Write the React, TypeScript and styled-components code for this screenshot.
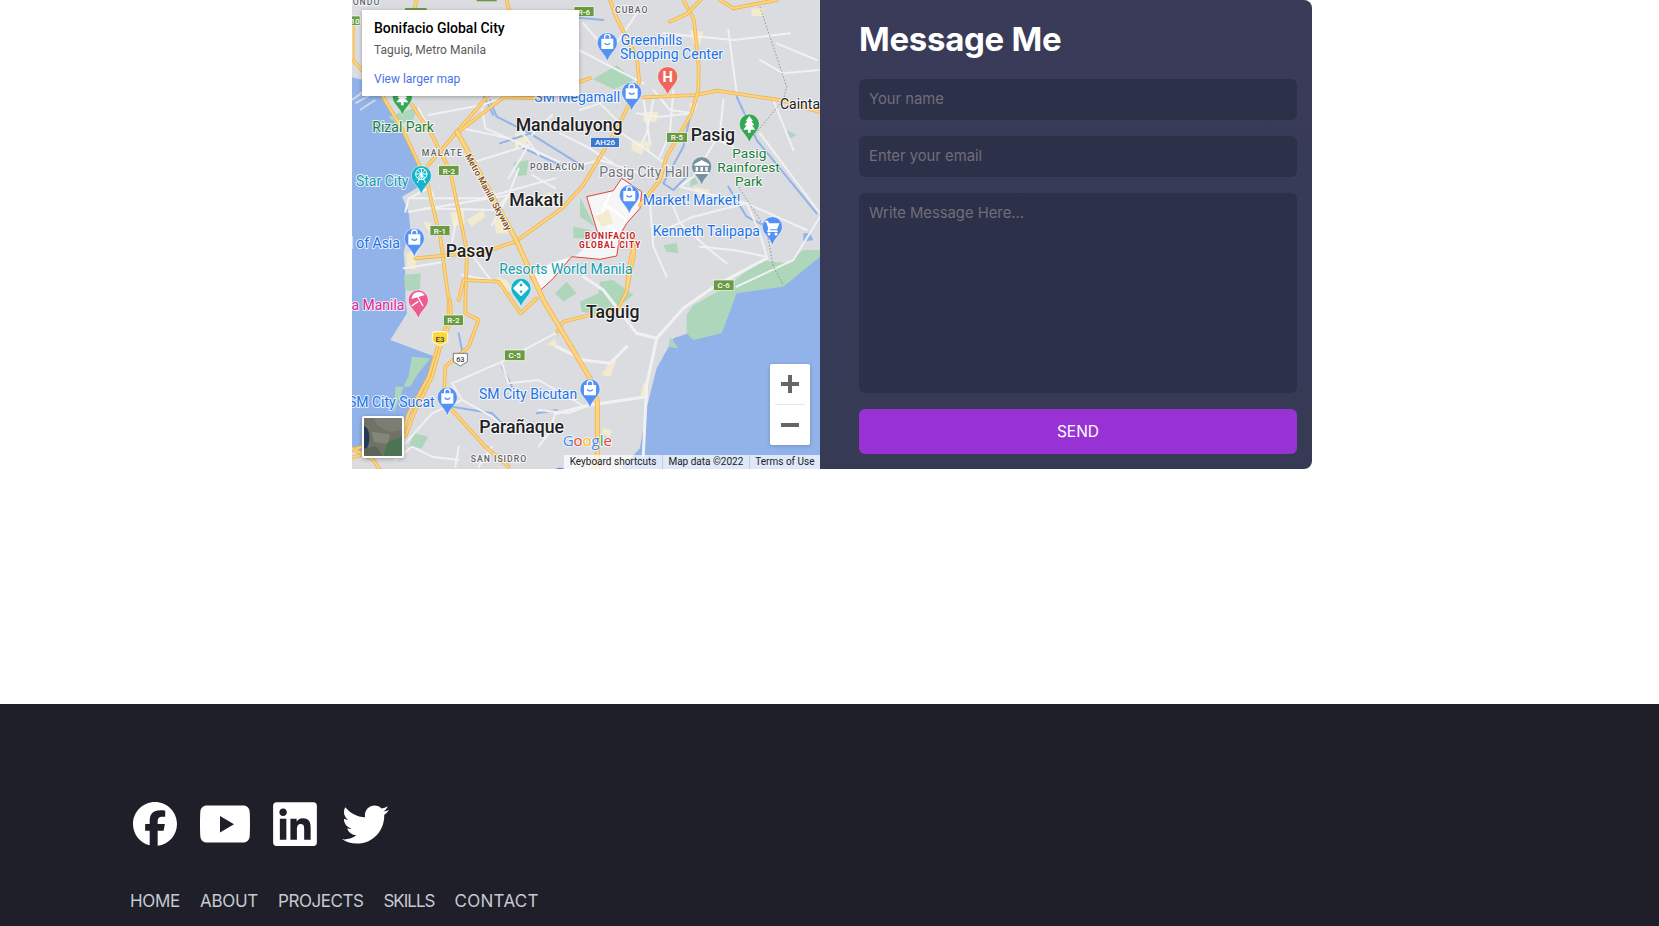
import React from "react";
import styled, { createGlobalStyle } from "styled-components";
import { FaFacebook, FaLinkedin, FaTwitter } from "react-icons/fa6";

const Global = createGlobalStyle`
  html, body { margin: 0; padding: 0; background: #fff; height: 926px; overflow: hidden; }
  * { box-sizing: border-box; }
  body { font-family: Inter, "Liberation Sans", sans-serif; }
`;

const Page = styled.div`
  display: flex;
  flex-direction: column;
  height: 926px;
  overflow: hidden;
`;
const ContactSection = styled.section`
  height: 704px;
  padding-left: 352px;
`;
const ContactCard = styled.div`
  display: flex;
  width: 960px;
  height: 469px;
`;
const MapPane = styled.div`
  position: relative;
  width: 468px;
  height: 469px;
  overflow: hidden;
  background: #dbdce0;
  font-family: Roboto, sans-serif;
`;
const MapDrawing = styled.svg`
  display: block;
  width: 468px;
  height: 469px;
`;
const InfoWindow = styled.div`
  position: absolute;
  left: 10px;
  top: 10px;
  width: 217px;
  height: 86px;
  padding: 9px 12px;
  background: #fff;
  box-shadow: 0 1px 4px rgba(0, 0, 0, 0.3);
`;
const InfoTitle = styled.div`
  font-size: 14px;
  font-weight: 500;
  line-height: 18px;
  color: #000;
`;
const InfoAddress = styled.div`
  margin-top: 5px;
  font-size: 12px;
  line-height: 16px;
  color: #5b5b5b;
`;
const InfoLink = styled.div`
  margin-top: 13px;
  font-size: 12px;
  line-height: 16px;
  color: #4a72e8;
`;
const ZoomControl = styled.div`
  position: absolute;
  left: 418px;
  top: 364px;
  width: 40px;
  height: 81px;
  display: flex;
  flex-direction: column;
  align-items: center;
  background: #fff;
  border-radius: 2px;
  box-shadow: 0 1px 4px rgba(0, 0, 0, 0.2);
`;
const ZoomButton = styled.div`
  height: 40px;
  width: 40px;
  display: flex;
  align-items: center;
  justify-content: center;
`;
const ZoomDivider = styled.div`
  width: 30px;
  height: 1px;
  background: #e6e6e6;
`;
const SatelliteThumb = styled.div`
  position: absolute;
  left: 10px;
  top: 416px;
  width: 42px;
  height: 42px;
  border: 2px solid #fff;
  border-radius: 2px;
  box-shadow: 0 1px 4px rgba(0, 0, 0, 0.3);
  overflow: hidden;
`;
const Attribution = styled.div`
  position: absolute;
  right: 0;
  bottom: 0;
  height: 14px;
  display: flex;
  font-size: 10px;
  line-height: 14px;
  color: #222;
  background: rgba(255, 255, 255, 0.7);
`;
const AttributionItem = styled.span`
  padding: 0 5.5px;
  & + & {
    border-left: 1px solid #c4cbe0;
  }
`;

const FormPane = styled.form`
  width: 492px;
  height: 469px;
  padding: 17px 15px 15px 39px;
  display: flex;
  flex-direction: column;
  background: linear-gradient(180deg, #393b58 0%, #363a55 100%);
  border-radius: 0 8px 8px 0;
`;
const FormTitle = styled.h2`
  margin: 0 0 19px;
  height: 43px;
  font-size: 33px;
  line-height: 44px;
  font-weight: 700;
  letter-spacing: -0.3px;
  color: #fff;
`;
const fieldStyles = `
  width: 100%;
  display: block;
  border: 0;
  outline: 0;
  border-radius: 6px;
  background: #2d3049;
  color: #fff;
  padding: 0 10px 2px;
  font-family: Inter, "Liberation Sans", sans-serif;
  font-size: 14.8px;
  &::placeholder { color: #6f6e79; opacity: 1; }
`;
const TextField = styled.input`
  ${fieldStyles}
  height: 41px;
  margin-bottom: 16px;
`;
const MessageField = styled.textarea`
  ${fieldStyles}
  height: 200px;
  padding-top: 11px;
  margin-bottom: 16px;
  resize: none;
`;
const SendButton = styled.button`
  height: 45px;
  width: 100%;
  border: 0;
  border-radius: 6px;
  background: #9932d4;
  color: #fff;
  font-family: Inter, "Liberation Sans", sans-serif;
  font-size: 15.5px;
  font-weight: 400;
`;

const Footer = styled.footer`
  flex: 1;
  background: #1e1f29;
  padding: 95px 130px 0;
`;
const SocialRow = styled.div`
  display: flex;
  align-items: center;
  gap: 23px;
  height: 50px;
  padding-left: 3px;
`;
const SocialLink = styled.a<{ $w: number; $h: number; $ml?: number }>`
  display: flex;
  color: #fff;
  margin-left: ${(p) => p.$ml ?? 0}px;
  svg {
    display: block;
    width: ${(p) => p.$w}px;
    height: ${(p) => p.$h}px;
  }
`;
const FooterNav = styled.nav`
  display: flex;
  gap: 20px;
  margin-top: 38px;
`;
const FooterLink = styled.a<{ $track?: number }>`
  font-size: 17px;
  line-height: 28px;
  letter-spacing: ${(p) => p.$track ?? -0.3}px;
  color: #c6c9d0;
`;

const Lbl = styled.text<{ $c: string; $s: number; $w?: number; $ls?: number }>`
  font-family: Roboto, sans-serif;
  font-size: ${(p) => p.$s}px;
  font-weight: ${(p) => p.$w ?? 400};
  letter-spacing: ${(p) => p.$ls ?? 0}px;
  fill: ${(p) => p.$c};
  stroke: rgba(255, 255, 255, 0.8);
  stroke-width: 6px;
  stroke-linejoin: round;
  paint-order: stroke;
`;
const ShieldText = styled.text<{ $c: string; $s: number }>`
  font-family: Roboto, sans-serif;
  font-size: ${(p) => p.$s}px;
  font-weight: 500;
  fill: ${(p) => p.$c};
  text-anchor: middle;
`;
const PinGlyph = styled.text`
  font-family: Roboto, sans-serif;
  font-size: 44px;
  font-weight: 700;
  fill: #fff;
  text-anchor: middle;
`;
const GoogleMark = styled.text`
  font-family: "Open Sans", sans-serif;
  font-size: 45px;
  font-weight: 400;
  stroke: rgba(255, 255, 255, 0.8);
  stroke-width: 5px;
  paint-order: stroke;
`;

const B = 705;
const BLUE = "#1a73e8";
const labels: [string, number, number, string, number, number?, number?][] = [
  ["ONDO", 8, 14, "#5f6368", 26, 500, 3],
  ["CUBAO", 795, 38, "#5f6368", 26, 500, 3],
  ["Greenhills", 812, 135, BLUE, 42],
  ["Shopping Center", 810, 178, BLUE, 42],
  ["SM Megamall", 553, 305, BLUE, 42],
  ["Cainta", 1290, 326, "#202124", 42],
  ["Rizal Park", 67, 395, "#188038", 42],
  ["Mandaluyong", 497, 393, "#202124", 53, 500],
  ["Pasig", 1022, 422, "#202124", 53, 500],
  ["Pasig", 1147, 475, "#188038", 41],
  ["Rainforest", 1102, 516, "#188038", 41],
  ["Park", 1155, 558, "#188038", 41],
  ["MALATE", 215, 468, "#5f6368", 26, 500, 4],
  ["POBLACION", 540, 509, "#5f6368", 26, 500, 2.5],
  ["Pasig City Hall", 748, 531, "#70757a", 42],
  ["Star City", 18, 558, "#129eaf", 42],
  ["Makati", 478, 618, "#202124", 53, 500],
  ["Market! Market!", 878, 615, BLUE, 42],
  ["Kenneth Talipapa", 908, 707, BLUE, 42],
  ["BONIFACIO", 705, 717, "#c5221f", 25, 700, 3],
  ["GLOBAL CITY", 687, B + 40, "#c5221f", 25, 700, 3],
  ["l of Asia", -2, B + 40, BLUE, 42],
  ["Pasay", 287, B + 65, "#202124", 53, 500],
  ["Resorts World Manila", 448, B + 118, "#129eaf", 42],
  ["la Manila", -6, B + 224, "#e52592", 42],
  ["Taguig", 708, B + 250, "#202124", 53, 500],
  ["SM City Bicutan", 387, B + 491, BLUE, 42],
  ["SM City Sucat", -6, B + 516, BLUE, 42],
  ["Parañaque", 388, B + 593, "#202124", 53, 500],
  ["SAN ISIDRO", 362, B + 680, "#5f6368", 26, 500, 3],
];
const shields: [string, number, number, number, number, string, string][] = [
  ["R-6", 672, 20, 60, 30, "#6a9b43", "#fff"],
  ["R-5", 950, 397, 62, 30, "#6a9b43", "#fff"],
  ["AH26", 722, 412, 86, 30, "#3b78d0", "#fff"],
  ["R-2", 266, 497, 61, 30, "#6a9b43", "#fff"],
  ["R-1", 240, 677, 60, 30, "#6a9b43", "#fff"],
  ["10", 0, 48, 30, 28, "#6a9b43", "#fff"],
  ["C-6", 1090, B + 135, 62, 32, "#6a9b43", "#fff"],
  ["R-2", 280, B + 240, 60, 32, "#6a9b43", "#fff"],
  ["C-5", 463, B + 345, 62, 32, "#6a9b43", "#fff"],
];
const pins: [number, number, string, string][] = [
  [772, 128, "#5491f5", "bag"],
  [845, 277, "#5491f5", "bag"],
  [953, 230, "#ee675c", "H"],
  [1198, 372, "#34a853", "tree"],
  [1055, 500, "#78909c", "hall"],
  [838, 585, "#5491f5", "bag"],
  [1267, 680, "#5491f5", "cart"],
  [214, 527, "#12b5cb", "wheel"],
  [157, 290, "#34a853", "tree"],
  [193, 715, "#5491f5", "bag"],
  [513, B + 160, "#12b5cb", "casino"],
  [205, B + 195, "#ee5a92", "beach"],
  [720, B + 462, "#5491f5", "bag"],
  [292, B + 487, "#5491f5", "bag"],
];
const yellowRoads = [
  "M96 285 L161 395 L231 545 L271 715 L296 900 L296 960 L266 1030 L236 1130 L176 1240 L156 1300 L6 1350",
  "M300 900 L304 960 L274 1030 L246 1130 L192 1240 L168 1305 L50 1362 L6 1372",
  "M186 315 L246 405 L301 515 L351 755 L346 900 L346 940 L386 960 L356 1040 L286 1100 L281 1200",
  "M416 285 L321 395 L231 500",
  "M196 775 L406 755 L496 725 L636 625 L700 555 L810 370 L868 245 L860 170 L800 55 L780 0",
  "M880 292 L1040 285 L1100 272 L1300 302 L1410 337",
  "M1000 0 L1032 60 L1046 200 L1045 270 L1025 340 L950 470 L930 540 L870 615",
  "M830 870 L835 810 L850 740 M850 705 L852 765 L830 875 L800 935 L720 945 L640 965 L622 995",
  "M1110 0 L1150 25 L1280 0",
  "M960 65 L1010 42 L1052 0",
  "M8 180 L100 280",
  "M8 60 L8 175",
  "M326 900 L341 840 L446 845 L512 940 L560 895",
  "M306 1230 L406 1340 L476 1400",
  "M470 0 L482 50 L560 110",
  "M320 400 L460 292 L580 295 L640 262 L720 235",
  "M200 0 L190 40 L160 90",
  "M6 1345 L70 1380 L90 1410",
];
const skyway = "M321 395 L496 715 L580 900 L726 1145 L742 1205 L742 1410";
/* minor roads, each list drawn in the coordinate space of one tracing */
const whiteA = [
  "M300 250 L450 185 L610 100",
  "M160 430 L240 340 L330 300 L300 250",
  "M450 190 L470 250 L560 240 L690 315",
  "M610 340 L590 400 L560 440",
  "M330 300 L420 350 L480 400",
  "M560 330 L650 340 L700 320",
  "M130 480 L180 440 L240 470 L320 480",
  "M320 440 L310 500",
  "M420 440 L380 500",
];
const whiteB = [
  "M280 0 L330 60 L400 70",
  "M140 100 L260 180 L340 240",
  "M0 240 L120 210 L240 250",
  "M360 290 L560 340 L740 420",
  "M340 350 L360 400 L450 480 L500 520",
  "M780 380 L700 510 L530 590",
  "M600 130 L780 370",
  "M490 30 L480 130 L400 260 L360 290",
  "M230 70 L300 80 L400 70",
  "M280 30 L260 130 L240 170",
  "M340 0 L330 130 L300 200",
  "M180 100 L120 40 L60 60",
  "M420 130 L520 170",
  "M270 340 L280 470 L320 560",
  "M560 340 L600 430 L620 500",
  "M420 470 L520 480 L620 500",
  "M290 430 L400 380 L560 340",
  "M0 130 L80 170 L160 220",
  "M640 30 L700 180",
];
const whiteC = [
  "M170 310 L390 310 L610 250",
  "M170 350 L470 300",
  "M240 290 L260 430",
  "M330 100 L470 130 L620 200",
  "M370 200 L530 150 L470 250",
  "M390 40 L400 100 L470 130",
  "M160 350 L170 310 L230 280",
  "M215 340 L430 345 L470 300",
  "M230 60 L390 30 L450 10",
  "M200 40 L240 120",
  "M300 440 L320 340",
  "M420 390 L470 300 L500 220",
  "M540 240 L610 280",
  "M500 100 L560 180",
  "M155 520 L280 500",
  "M360 480 L420 560",
  "M330 540 L440 560",
  "M600 60 L540 120",
];
const whiteTop = [
  "M600 105 L880 250",
  "M940 100 L1150 120 L1320 100",
  "M1135 90 L1160 280",
  "M880 292 L900 430",
  "M1280 130 L1400 180",
  "M800 130 L860 40",
  "M1230 180 L1300 220 L1410 210",
  "M700 70 L760 140",
];
const whiteMain = [
  "M1250 775 L1100 855 L1000 925 L920 1015 L890 1155 L880 1365",
  "M860 1000 L920 1015",
  "M700 830 L760 870 L860 1000",
  "M620 1240 L720 1215 L890 1190",
  "M620 1040 L700 1080 L780 1090 L830 1040",
];
const rivers = [
  "M1160 290 L1220 420 L1400 640",
  "M420 300 L440 350 L540 400 L700 500",
  "M400 285 L430 345",
  "M650 50 L760 60",
  "M1020 350 L1000 440 L940 550 L970 570 L1010 530",
  "M1135 560 L1190 650 L1250 680",
  "M326 1000 L336 1050",
  "M456 1100 L486 1160",
  "M306 1220 L426 1240 L486 1300",
  "M560 1240 L620 1230",
  "M450 430 L540 400",
  "M510 440 L640 500",
];
const parks = [
  "M728 238 L800 196 L852 240 L792 268 Z",
  "M490 490 L535 480 L530 525 L505 528 Z",
  "M690 592 L735 680 L690 650 Z",
  "M670 680 L720 690 L700 715 L670 715 Z",
  "M115 350 L200 322 L190 362 L140 372 Z",
  "M615 880 L650 845 L680 880 L640 905 Z",
  "M690 905 L745 880 L750 845 L790 840 L850 885 L810 915 L750 945 L695 935 Z",
  "M162 825 L212 820 L210 875 L165 870 Z",
  "M1010 945 L1030 915 L1130 860 L1230 780 L1310 790 L1360 750 L1410 750 L1410 770 L1300 860 L1160 880 L1115 1000 L1030 1020 L1010 1000 Z",
  "M186 1070 L241 1075 L201 1125 L181 1160 L136 1160 L131 1240 L150 1190 L165 1150 L175 1130 Z",
  "M960 1010 L985 1045 L955 1040 Z",
  "M1025 520 L1045 550 L1020 560 Z",
  "M940 735 L980 730 L985 760 L950 755 Z",
  "M1310 390 L1340 405 L1320 415 Z",
  "M195 1300 L235 1310 L215 1345 L175 1340 Z",
];
const patches = [
  "M495 400 L530 395 L530 445 L495 445 Z",
  "M880 335 L925 335 L920 365 L880 365 Z",
  "M1020 90 L1060 95 L1050 135 L1030 130 Z",
  "M1205 25 L1240 25 L1240 48 L1205 48 Z",
  "M845 420 L890 430 L875 465 L845 450 Z",
  "M170 760 L200 750 L196 810 L170 805 Z",
  "M780 1085 L800 1080 L780 1130 L755 1125 Z",
  "M440 830 L470 840 L490 875 L455 875 Z",
  "M760 1285 L785 1290 L780 1310 L755 1300 Z",
  "M1015 310 L1045 310 L1030 345 Z",
  "M590 1035 L615 1015 L620 1040 Z",
  "M880 1150 L890 1150 L885 1195 L870 1195 Z",
  "M430 665 L470 640 L475 700 L440 700 Z",
  "M300 640 L340 630 L345 670 L310 680 Z",
  "M220 665 L245 670 L235 695 Z",
  "M350 660 L400 630 L405 650 L365 680 Z",
  "M560 600 L600 575 L610 600 L580 620 Z",
  "M880 420 L905 430 L895 460 Z",
  "M760 720 L830 690 L800 740 Z",
  "M1030 560 L1080 570 L1060 600 Z",
];

const PinIcon: React.FC<{ k: string }> = ({ k }) => {
  if (k === "H") return <PinGlyph x={0} y={16}>H</PinGlyph>;
  if (k === "bag")
    return (
      <g>
        <path d="M-18 -12 H18 V16 a3 3 0 0 1 -3 3 H-15 a3 3 0 0 1 -3 -3 Z" fill="#fff" />
        <path d="M-8 -12 V-17 a8 8 0 0 1 16 0 V-12" fill="none" stroke="#fff" strokeWidth="4" />
        <path d="M-8 1 a9 9 0 0 0 16 0" fill="none" stroke="#5491f5" strokeWidth="4" />
      </g>
    );
  if (k === "tree") return <path d="M0 -24 L11 -9 H6 L15 4 H8 L18 17 H4 V26 H-4 V17 H-18 L-8 4 H-15 L-6 -9 H-11 Z" fill="#fff" />;
  if (k === "hall") return <path d="M0 -20 L22 -8 V-3 H-22 V-8 Z M-18 1 H-11 V14 H-18 Z M-4 1 H4 V14 H-4 Z M11 1 H18 V14 H11 Z M-22 16 H22 V22 H-22 Z" fill="#fff" />;
  if (k === "cart")
    return (
      <g fill="#fff">
        <path d="M-22 -18 H-13 L-10 -10 H22 L14 8 H-6 L-8 11 H16 V16 H-16 L-12 6 L-18 -13 H-22 Z" />
        <circle cx="-10" cy="22" r="4.5" />
        <circle cx="11" cy="22" r="4.5" />
      </g>
    );
  if (k === "wheel")
    return (
      <g fill="none" stroke="#fff" strokeWidth="3">
        <circle cx="0" cy="-5" r="17" />
        <path d="M0 -22 V12 M-17 -5 H17 M-12 -17 L12 7 M12 -17 L-12 7 M0 -5 L-12 22 M0 -5 L12 22" />
      </g>
    );
  if (k === "casino")
    return (
      <g transform="rotate(45)">
        <rect x="-17" y="-17" width="34" height="34" fill="#fff" rx="3" />
        <circle cx="-7" cy="-7" r="4" fill="#12b5cb" />
        <circle cx="7" cy="7" r="4" fill="#12b5cb" />
      </g>
    );
  return (
    <g fill="none" stroke="#fff" strokeWidth="4">
      <path d="M-18 -6 A20 20 0 0 1 16 -16 Z" fill="#fff" />
      <path d="M-2 -10 L14 18 M-20 18 L0 4" />
    </g>
  );
};

const RoadSet: React.FC<{ list: string[]; w: number; c?: string }> = ({ list, w, c = "#f1f1f3" }) => (
  <g fill="none" stroke={c} strokeWidth={w} strokeLinejoin="round" strokeLinecap="round">
    {list.map((d, i) => (
      <path key={i} d={d} />
    ))}
  </g>
);

const MapArt: React.FC = () => (
  <MapDrawing viewBox="0 0 468 469">
    <defs>
      <clipPath id="bgc">
        <path d="M710 590 L790 572 L815 535 L875 575 L870 625 L830 670 L810 705 L800 768 L750 778 L665 770 L610 835 L570 872 L540 830 L600 790 L680 765 L745 705 Z" />
      </clipPath>
    </defs>
    <g transform="translate(-2 0) scale(0.33333)">
      <rect x="0" y="0" width="1420" height="1420" fill="#dbdce0" />
      <path
        fill="#91b3e9"
        d="M0 230 L40 240 L96 285 L156 395 L196 475 L211 525 L216 555 L156 590 L176 635 L181 685 L161 755 L166 825 L166 900 L171 940 L121 1020 L241 1065 L256 1070 L216 1170 L160 1290 L155 1340 L30 1352 L0 1345 Z"
      />
      <path
        fill="#91b3e9"
        d="M1420 755 L1360 780 L1340 810 L1290 850 L1230 830 L1150 870 L1110 995 L1030 995 L970 1015 L920 1105 L890 1225 L870 1345 L800 1420 L1420 1420 Z"
      />
      <path d="M1360 700 H1380 L1390 720 L1360 725 Z" fill="#91b3e9" />
      <path d="M16 310 L60 285 M30 330 L76 300 M6 300 L40 275" stroke="#d4d8e6" strokeWidth="6" fill="none" />
      {parks.map((d, i) => (
        <path key={i} d={d} fill="#aed6bb" />
      ))}
      {patches.map((d, i) => (
        <path key={i} d={d} fill="#f2ebcd" />
      ))}
      <RoadSet list={rivers} w={6} c="#91b3e9" />
      <g transform="translate(6 900)">
        <RoadSet list={whiteA} w={6} />
      </g>
      <g transform="translate(630 270)">
        <RoadSet list={whiteB} w={6} />
      </g>
      <g transform="translate(6 285)">
        <RoadSet list={whiteC} w={6} />
      </g>
      <RoadSet list={whiteTop} w={6} />
      <RoadSet list={whiteMain} w={9} />
      <path d="M1230 20 L1310 260 L1300 300 L1200 420 M1165 560 L1250 690 L1270 800 L1300 855" fill="none" stroke="#70757a" strokeWidth="2" strokeDasharray="5 5" />
      <rect x="530" y="530" width="360" height="350" fill="#f6f6f7" clipPath="url(#bgc)" />
      <g fill="none" stroke="#fff" strokeWidth="6">
        <path d="M760 610 L830 660 M740 640 L800 700 M780 580 L740 680" />
      </g>
      <path d="M735 650 L775 630 L790 670 L755 680 Z" fill="#f2ebcd" />
      <path
        d="M710 590 L790 572 L815 535 L875 575 L870 625 L830 670 L810 705 L800 768 L750 778 L665 770 L610 835 L570 872 L540 830 M710 590 L745 705"
        fill="none"
        stroke="#e34234"
        strokeWidth="3"
      />
      <g fill="none" strokeLinejoin="round" strokeLinecap="round">
        {yellowRoads.map((d, i) => (
          <g key={i}>
            <path d={d} stroke="#efb64a" strokeWidth="11" />
            <path d={d} stroke="#fcd483" strokeWidth="6" />
          </g>
        ))}
        <path d={skyway} stroke="#efb64a" strokeWidth="15" />
        <path d={skyway} stroke="#fcd483" strokeWidth="10" />
      </g>
      <rect x="165" y="24" width="65" height="8" fill="#6a9b43" />
      <rect x="380" y="0" width="60" height="4" fill="#6a9b43" />
      {shields.map(([t, x, y, w, h, bg, c], i) => (
        <g key={i}>
          <rect x={x} y={y} width={w} height={h} fill={bg} stroke="#fff" strokeWidth="2" />
          <ShieldText $c={c} $s={24} x={x + w / 2} y={y + h / 2 + 9}>
            {t}
          </ShieldText>
        </g>
      ))}
      <path d="M247 1000 Q247 995 255 995 H285 Q293 995 293 1000 V1025 L270 1037 L247 1025 Z" fill="#fdd835" stroke="#fff" strokeWidth="3" />
      <ShieldText $c="#3c4043" $s={24} x={270} y={1026}>E3</ShieldText>
      <path d="M310 1060 H352 V1085 L331 1098 L310 1085 Z" fill="#fff" stroke="#3c4043" strokeWidth="2" />
      <ShieldText $c="#3c4043" $s={22} x={331} y={1085}>63</ShieldText>
      {labels.map(([t, x, y, c, s, w, ls], i) => (
        <Lbl key={i} x={x} y={y} $c={c} $s={s} $w={w} $ls={ls}>
          {t}
        </Lbl>
      ))}
      <Lbl x={345} y={468} $c="#7a4a1e" $s={27} $w={500} transform="rotate(61 345 468)">
        Metro Manila Skyway
      </Lbl>
      {pins.map(([x, y, c, k], i) => (
        <g key={i} transform={`translate(${x} ${y})`}>
          <path d="M-30 0 A30 30 0 1 1 30 0 C30 22 8 30 0 56 C-8 30 -30 22 -30 0 Z" fill={c} stroke="#fff" strokeWidth="1.5" />
          <PinIcon k={k} />
        </g>
      ))}
      <GoogleMark x={638} y={B + 634}>
        <tspan fill="#4285f4">G</tspan>
        <tspan fill="#ea4335">o</tspan>
        <tspan fill="#fbbc05">o</tspan>
        <tspan fill="#4285f4">g</tspan>
        <tspan fill="#34a853">l</tspan>
        <tspan fill="#ea4335">e</tspan>
      </GoogleMark>
      <circle cx="630" cy="1425" r="22" fill="#4f8ef0" />
    </g>
  </MapDrawing>
);

const ThumbArt: React.FC = () => (
  <svg viewBox="0 0 38 38" width="38" height="38" style={{ display: "block" }}>
    <rect width="38" height="38" fill="#6f7265" />
    <path d="M0 8 C6 10 7 22 3 30 L0 31 Z" fill="#23395a" />
    <path d="M10 0 H38 V12 L26 14 L14 8 Z" fill="#7c7e73" />
    <path d="M8 14 L26 16 L24 26 L10 24 Z" fill="#85867a" />
    <path d="M20 36 L24 24 L38 18 V38 H20 Z" fill="#4c7454" />
    <path d="M0 31 L12 28 L18 38 H0 Z" fill="#5c6457" />
  </svg>
);

const YoutubeIcon: React.FC = () => (
  <svg viewBox="0 0 50 38">
    <path
      fill="currentColor"
      fillRule="evenodd"
      d="M7 0.5 H43 C47 0.5 49.5 3 49.7 7 C50.1 14 50.1 24 49.7 31 C49.5 35 47 37.5 43 37.5 H7 C3 37.5 0.5 35 0.3 31 C-0.1 24 -0.1 14 0.3 7 C0.5 3 3 0.5 7 0.5 Z M20 11 V27.5 L34 19.2 Z"
    />
  </svg>
);

const ZoomGlyph: React.FC<{ plus?: boolean }> = ({ plus }) => (
  <svg width="18" height="18" viewBox="0 0 18 18">
    <path d="M0 7 H18 V11 H0 Z" fill="#666" />
    {plus && <path d="M7 0 H11 V18 H7 Z" fill="#666" />}
  </svg>
);

export default function App() {
  return (
    <Page>
      <Global />
      <ContactSection>
        <ContactCard>
          <MapPane>
            <MapArt />
            <InfoWindow>
              <InfoTitle>Bonifacio Global City</InfoTitle>
              <InfoAddress>Taguig, Metro Manila</InfoAddress>
              <InfoLink>View larger map</InfoLink>
            </InfoWindow>
            <ZoomControl>
              <ZoomButton>
                <ZoomGlyph plus />
              </ZoomButton>
              <ZoomDivider />
              <ZoomButton>
                <ZoomGlyph />
              </ZoomButton>
            </ZoomControl>
            <SatelliteThumb>
              <ThumbArt />
            </SatelliteThumb>
            <Attribution>
              <AttributionItem>Keyboard shortcuts</AttributionItem>
              <AttributionItem>Map data ©2022</AttributionItem>
              <AttributionItem>Terms of Use</AttributionItem>
            </Attribution>
          </MapPane>
          <FormPane>
            <FormTitle>Message Me</FormTitle>
            <TextField placeholder="Your name" />
            <TextField placeholder="Enter your email" />
            <MessageField placeholder="Write Message Here..." />
            <SendButton type="button">SEND</SendButton>
          </FormPane>
        </ContactCard>
      </ContactSection>
      <Footer>
        <SocialRow>
          <SocialLink $w={44} $h={44}>
            <FaFacebook />
          </SocialLink>
          <SocialLink $w={50} $h={38}>
            <YoutubeIcon />
          </SocialLink>
          <SocialLink $w={44} $h={50}>
            <FaLinkedin />
          </SocialLink>
          <SocialLink $w={47} $h={47} $ml={2}>
            <FaTwitter />
          </SocialLink>
        </SocialRow>
        <FooterNav>
          <FooterLink>HOME</FooterLink>
          <FooterLink>ABOUT</FooterLink>
          <FooterLink $track={-0.45}>PROJECTS</FooterLink>
          <FooterLink $track={-1}>SKILLS</FooterLink>
          <FooterLink $track={0.3}>CONTACT</FooterLink>
        </FooterNav>
      </Footer>
    </Page>
  );
}
